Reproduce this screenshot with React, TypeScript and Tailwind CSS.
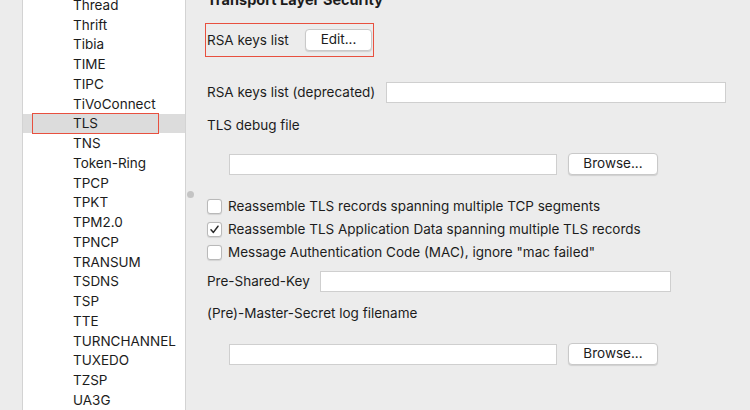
import React from "react";

const protocols = [
  "Thread",
  "Thrift",
  "Tibia",
  "TIME",
  "TIPC",
  "TiVoConnect",
  "TLS",
  "TNS",
  "Token-Ring",
  "TPCP",
  "TPKT",
  "TPM2.0",
  "TPNCP",
  "TRANSUM",
  "TSDNS",
  "TSP",
  "TTE",
  "TURNCHANNEL",
  "TUXEDO",
  "TZSP",
  "UA3G",
];

const MacButton = ({ label, width }: { label: string; width: string }) => (
  <button
    className={`${width} h-[22px] bg-white rounded-[4px] border border-[#c9c9c9] shadow-[0_1px_1px_rgba(0,0,0,0.12)] text-[13.5px] text-[#1c1c1c] leading-none flex items-center justify-center`}
  >
    {label}
  </button>
);

const Checkbox = ({ checked, label }: { checked?: boolean; label: string }) => (
  <div className="h-[23px] flex items-center">
    <span className="w-[15px] h-[15px] bg-white border border-[#b9b9b9] rounded-[3px] flex items-center justify-center shadow-[0_0.5px_1px_rgba(0,0,0,0.1)]">
      {checked && (
        <svg width="11" height="11" viewBox="0 0 11 11">
          <path
            d="M2 5.8 L4.4 8.4 L9 2.2"
            fill="none"
            stroke="#2a2a2a"
            strokeWidth="1.5"
            strokeLinecap="round"
            strokeLinejoin="round"
          />
        </svg>
      )}
    </span>
    <span className="ml-[6px]">{label}</span>
  </div>
);

const Field = ({ width }: { width: string }) => (
  <div className={`${width} h-[21px] bg-white border border-[#cfcfcf]`} />
);

export default function App() {
  return (
    <div
      className="w-[750px] h-[410px] overflow-hidden flex bg-[#ececec] text-[13.5px] text-[#1c1c1c]"
      style={{ fontFamily: "Inter, 'Noto Sans', sans-serif" }}
    >
      {/* left gutter */}
      <div className="w-[22px] shrink-0" />

      {/* protocol list */}
      <div className="w-[164px] shrink-0 bg-white border-l border-r border-[#d3d3d3] overflow-hidden">
        <div className="mt-[-5px]">
          {protocols.map((p) => (
            <div
              key={p}
              className={`relative h-[19.75px] flex items-center pl-[50px] ${
                p === "TLS" ? "bg-[#dcdcdc]" : ""
              }`}
            >
              {p}
              {p === "TLS" && (
                <div className="absolute left-[9px] top-[-1px] w-[127px] h-[21px] border border-[#e8503f]" />
              )}
            </div>
          ))}
        </div>
      </div>

      {/* splitter */}
      <div className="w-[0px] relative">
        <div className="absolute left-[1px] top-[191px] w-[7px] h-[7px] rounded-full bg-[#c4c4c4]" />
      </div>

      {/* settings pane */}
      <div className="flex-1 pl-[21px] flex flex-col">
        <div className="mt-[-8px] h-[16px] leading-[16px] font-bold text-[14.5px]">
          Transport Layer Security
        </div>

        <div className="mt-[15px] ml-[-2px] w-[169px] h-[34px] border border-[#e8503f] flex items-center pl-[1px]">
          <span>RSA keys list</span>
          <div className="ml-auto mr-[1px]">
            <MacButton label="Edit..." width="w-[67px]" />
          </div>
        </div>

        <div className="mt-[25px] h-[21px] flex items-center">
          <span className="w-[179px] shrink-0">RSA keys list (deprecated)</span>
          <Field width="w-[340px]" />
        </div>

        <div className="mt-[14px] h-[16px] leading-[16px]">TLS debug file</div>

        <div className="mt-[20px] pl-[22px] flex items-center gap-[11px]">
          <Field width="w-[328px]" />
          <MacButton label="Browse..." width="w-[90px]" />
        </div>

        <div className="mt-[20px] flex flex-col">
          <Checkbox label="Reassemble TLS records spanning multiple TCP segments" />
          <Checkbox checked label="Reassemble TLS Application Data spanning multiple TLS records" />
          <Checkbox label={'Message Authentication Code (MAC), ignore "mac failed"'} />
        </div>

        <div className="mt-[7px] h-[21px] flex items-center">
          <span className="w-[113px] shrink-0">Pre-Shared-Key</span>
          <Field width="w-[351px]" />
        </div>

        <div className="mt-[13px] h-[16px] leading-[16px]">
          (Pre)-Master-Secret log filename
        </div>

        <div className="mt-[22px] pl-[22px] flex items-center gap-[11px]">
          <Field width="w-[328px]" />
          <MacButton label="Browse..." width="w-[90px]" />
        </div>
      </div>
    </div>
  );
}
